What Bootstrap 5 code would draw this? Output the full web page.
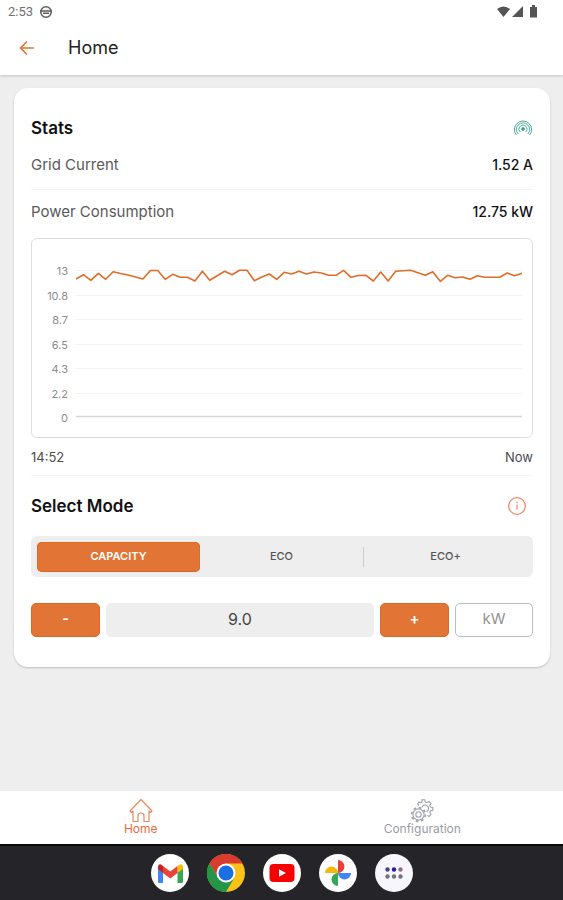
<!DOCTYPE html>
<html lang="en">
<head>
<meta charset="utf-8">
<meta name="viewport" content="width=device-width, initial-scale=1">
<title>Home</title>
<link href="https://cdn.jsdelivr.net/npm/bootstrap@5.3.0/dist/css/bootstrap.min.css" rel="stylesheet">
<style>
:root { --accent: #e27535; --soft: #eeeeee; }
body { font-family: Inter, "Noto Sans", sans-serif; font-size: 14px; line-height: 20px; color: #222; background: var(--soft); }
svg { display: block; flex: none; }
.status { height: 24px; font-family: Roboto, sans-serif; font-size: 13px; color: #707070; padding: 0 24px 0 8px; }
.appbar { height: 51px; padding: 0 19px 3px; }
.top-area { background: #fff; box-shadow: 0 1px 3px rgba(0,0,0,.18); }
.appbar h1 { font-size: 18px; line-height: 24px; font-weight: 400; margin-left: 33px; }
.panel { border-radius: 14px; margin: 13px 13px 0 14px; padding: 28px 17px 30px; box-shadow: 0 1px 2px rgba(0,0,0,.2); }
.panel h2 { font-size: 17px; line-height: 24px; font-weight: 600; color: #111; }
.stat-row { height: 50px; border-bottom: 1px solid #f3f3f3; }
.stat-row.power { height: 48px; border: 0; padding-bottom: 5px; }
.stat-row dt { font-size: 15px; font-weight: 400; color: #5a5a5a; }
.stat-row dd { font-weight: 500; color: #111; }
.chart { border: 1px solid #dedede; border-radius: 6px; height: 200px; padding: 25px 10px 12px; }
.scale { width: 26px; height: 161px; font-size: 11px; line-height: 14px; color: #8c8c8c; }
.plot { height: 147px; min-width: 0; overflow: visible; margin: 6px 0 0 8px; flex: 1 1 0; }
.plot path { fill: none; vector-effect: non-scaling-stroke; }
.times { height: 38px; font-size: 13px; color: #4c4c4c; border-bottom: 1px solid #f3f3f3; }
.mode-head { height: 60px; }
.info { margin-right: 6px; }
.modes { background: var(--soft); border-radius: 6px; padding: 5px 6px; height: 41px; }
.modes .btn { flex: 1 1 0; font-size: 11px; line-height: 16px; font-weight: 500; color: #555; border: 0; border-radius: 5px; padding: 6px 0 8px; }
.modes .btn.active { background: var(--accent); color: #fff; font-weight: 600; box-shadow: inset 0 0 0 1px #dc6924; }
.modes .vr { height: 20px; color: #666; }
.amount { margin-top: 26px; gap: 6px; }
.amount .btn, .amount input { height: 34px; border-radius: 5px; padding: 0 0 3px; line-height: 20px; }
.amount .step { background: var(--accent); border-color: #dc6924; color: #fff; width: 69px; font-size: 15px; font-weight: 600; }
.amount input { background: var(--soft); border: 0; font-size: 16px; color: #444; min-width: 0; }
.amount .unit { width: 78px; border-color: #b9bfbd; color: #929292; font-size: 15px; }
.tabs { background: #fff; height: 53px; }
.tabs a { flex: 1 1 0; font-size: 12px; line-height: 12px; color: #9a9ca4; padding-top: 7px; }
.tabs a.active { color: #e36d3c; }
.dock { background: #252529; border-top: 2px solid #0b0b0c; height: 56px; gap: 18px; }
.dock button { width: 38px; height: 38px; }
</style>
<script src="https://cdn.jsdelivr.net/npm/bootstrap@5.3.0/dist/js/bootstrap.bundle.min.js"></script>
</head>
<body class="d-flex flex-column min-vh-100">
<header class="top-area">
  <div class="status d-flex align-items-center">
    <span>2:53</span>
    <svg class="ms-1" width="16" height="14" viewBox="-1 0 16 14" fill="none" stroke="#5c5c5c" stroke-width="1.500"><circle cx="8" cy="7" r="5.200"/><path d="M2 6h12M5 8.200h6"/></svg>
    <svg class="ms-auto" width="42" height="14" viewBox="0 0 42 14" fill="#555"><path d="M0 4Q6.500-1 13 4L6.500 12zM26 1v11H15zM33 2h2V0h3v2h2v10.500h-7z"/></svg>
  </div>
  <div class="appbar d-flex align-items-center">
    <button class="btn p-0 border-0" type="button" aria-label="Back">
      <svg width="16" height="16" viewBox="0 0 16 16" fill="none" stroke="#e27535" stroke-width="1.600"><path d="M15 8H1.500M8 1.500L1.500 8L8 14.500"/></svg>
    </button>
    <h1 class="mb-0">Home</h1>
  </div>
</header>

<main class="flex-grow-1">
  <section class="panel bg-white">
    <div class="d-flex justify-content-between align-items-center">
      <h2 class="mb-0">Stats</h2>
      <svg width="20" height="20" viewBox="0 0 20 20" fill="none" stroke="#4fae9b" stroke-width="1"><circle cx="10" cy="11" r="1.400" fill="#25957e"/><path d="M7.200 14a4 4 0 1 1 5.600 0M5.200 16a6.600 6.600 0 1 1 9.600 0M3.300 17a8.600 8.600 0 1 1 13.400 0"/></svg>
    </div>
    <dl class="mb-0">
      <div class="stat-row d-flex justify-content-between align-items-center"><dt>Grid Current</dt><dd class="mb-0">1.52 A</dd></div>
      <div class="stat-row power d-flex justify-content-between align-items-center"><dt>Power Consumption</dt><dd class="mb-0">12.75 kW</dd></div>
    </dl>
    <div class="chart d-flex align-items-start">
      <div class="scale d-flex flex-column justify-content-between text-end">
        <span>13</span><span>10.8</span><span>8.7</span><span>6.5</span><span>4.3</span><span>2.2</span><span>0</span>
      </div>
      <svg class="plot" viewBox="0 0 60 147" preserveAspectRatio="none" role="img" aria-label="Power consumption">
        <path stroke="#f2f2f2" d="M0 .5H60M0 25.500H60M0 49.500H60M0 74.500H60M0 98.500H60M0 123.500H60"/>
        <path stroke="#d6d6d6" stroke-width="1.500" d="M0 146.500H60"/>
        <path stroke="#df6d2a" stroke-width="1.600" stroke-linejoin="round" d="M0 9L1 4.700L2 10.300L3 3.300L4 9.300L5 1.700L6 3.500L7 5L8 7L9 9L10 .5L11 .5L12 9.300L13 4.300L14 7.300L15 7.300L16 11L17 1.300L18 10.300L19 5.700L20 1.300L21 4.700L22 .3L23 .3L24 10.700L25 7L26 4L27 9.300L28 2.300L29 4L30 1.300L31 4L32 2L33 3L34 5.300L35 5.300L36 .3L37 7.300L38 5.500L39 5.300L40 11L41 2L42 11L43 1.300L44 .7L45 .3L46 2.700L47 5.300L48 1.700L49 11.300L50 5.300L51 7.700L52 7L53 9.300L54 5.700L55 7.300L57 7.300L58 3L59 5.700L60 3.300"/>
      </svg>
    </div>
    <div class="times d-flex justify-content-between align-items-center"><span>14:52</span><span>Now</span></div>
    <div class="mode-head d-flex justify-content-between align-items-center">
      <h2 class="mb-0">Select Mode</h2>
      <button class="info btn p-0 border-0" type="button" aria-label="About modes">
        <svg width="20" height="20" viewBox="0 0 20 20" fill="none" stroke="#ed8868" stroke-width="1.300"><circle cx="10" cy="10" r="8.300"/><path stroke="#f0a590" stroke-width="1.600" d="M10 8.500v5M10 5.700v1.500"/></svg>
      </button>
    </div>
    <div class="modes d-flex align-items-center" role="group" aria-label="Mode">
      <button class="btn active" type="button" aria-pressed="true">CAPACITY</button>
      <button class="btn" type="button">ECO</button>
      <div class="vr align-self-center"></div>
      <button class="btn" type="button">ECO+</button>
    </div>
    <div class="amount d-flex">
      <button class="btn step" type="button" aria-label="Decrease">-</button>
      <input class="flex-grow-1 text-center" type="text" value="9.0" aria-label="Capacity">
      <button class="btn step" type="button" aria-label="Increase">+</button>
      <button class="btn unit" type="button">kW</button>
    </div>
  </section>
</main>

<nav class="tabs d-flex text-center" aria-label="Main">
  <a class="active text-decoration-none d-flex flex-column align-items-center" href="#" aria-current="page">
    <svg width="24" height="25" viewBox="0 0 24 25" fill="none" stroke="#e58a66" stroke-width="1.200" stroke-linejoin="round"><path d="M1 13L12 1.500L23 13L21.500 14.500L20 13V23.500H15V18a3 3 0 0 0-6 0V23.500H4V13L2.500 14.500z"/></svg>
    <span>Home</span>
  </a>
  <a class="text-decoration-none d-flex flex-column align-items-center" href="#">
    <svg width="24" height="25" viewBox="0 0 24 25" fill="none" stroke="#a0a2aa" stroke-width="1.100">
      <circle cx="8.500" cy="16.500" r="5.600"/><circle cx="8.500" cy="16.500" r="2.700"/><circle cx="8.500" cy="16.500" r="6.900" stroke-width="1.700" stroke-dasharray="2.700 2.720"/>
      <path d="M9 7.500L7.500 6L9 4L11 4.800L12 4V1.800H14.800L15.300 4L17 4.700L19 3.500L21 5.600L19.800 7.500L20.500 9L22.800 9.500V12.300L20.500 13L19.800 14.700L21 16.500L19 18.500L17.300 17.400"/><path d="M12 9.200A3.400 3.400 0 1 1 16.500 13.600"/>
    </svg>
    <span>Configuration</span>
  </a>
</nav>
<footer class="dock d-flex justify-content-center align-items-center">
  <button class="btn p-0 border-0" type="button" aria-label="Gmail"><svg width="38" height="38" viewBox="0 0 38 38"><circle cx="19" cy="19" r="19" fill="#fff"/><path fill="#4285f4" d="M7 14L12 17.500V29H8.500Q7 29 7 27.500z"/><path fill="#34a853" d="M26.500 17.500L32 13.500V27.500Q32 29 30.500 29H26.500z"/><path fill="#fbbc04" d="M26.500 12L29 10.500Q32 9.500 32 13V15L26.500 19z"/><path fill="#c5221f" d="M7 13Q7 9.500 10 10.500L12 12V19L7 15z"/><path fill="#ea4335" d="M12 12L19.300 17.500L26.500 12V19L19.300 24.500L12 19z"/></svg></button>
  <button class="btn p-0 border-0" type="button" aria-label="Chrome"><svg width="38" height="38" viewBox="0 0 38 38"><circle cx="19" cy="19" r="19" fill="#fbc116"/><path fill="#d93c2e" d="M2.500 9.500A19 19 0 0 1 35.500 9.500H19L11 23.500z"/><path fill="#249447" d="M2.500 9.500A19 19 0 0 0 19 38L27.500 23.500L19 28L11 23.500z"/><circle cx="19" cy="19" r="9.500" fill="#fff"/><circle cx="19" cy="19" r="7.500" fill="#1b6fe4"/></svg></button>
  <button class="btn p-0 border-0" type="button" aria-label="YouTube"><svg width="38" height="38" viewBox="0 0 38 38"><circle cx="19" cy="19" r="19" fill="#fff"/><rect x="6.500" y="10" width="25" height="18" rx="4" fill="#f60000"/><path fill="#fff" d="M16 15.300L23 19L16 22.700z"/></svg></button>
  <button class="btn p-0 border-0" type="button" aria-label="Photos"><svg width="38" height="38" viewBox="0 0 38 38"><circle cx="19" cy="19" r="19" fill="#fff"/><path fill="#ea4335" d="M19 6A6.500 6.500 0 0 1 19 19z"/><path fill="#4285f4" d="M19 19H32A6.500 6.500 0 0 1 19 19z"/><path fill="#34a853" d="M19 19V32A6.500 6.500 0 0 1 19 19z"/><path fill="#f6b90b" d="M19 19H6A6.500 6.500 0 0 1 19 19z"/></svg></button>
  <button class="btn p-0 border-0" type="button" aria-label="All apps"><svg width="38" height="38" viewBox="0 0 38 38"><circle cx="19" cy="19" r="19" fill="#f8f6fd"/><g fill="#73717e"><circle cx="12.500" cy="22.500" r="2.200"/><circle cx="19" cy="22.500" r="2.200"/><circle cx="25.500" cy="22.500" r="2.200"/></g><circle cx="12.500" cy="15.500" r="2.200" fill="#46458b"/><circle cx="19" cy="15.500" r="2.200" fill="#28208d"/><circle cx="25.500" cy="15.500" r="2.200" fill="#946b80"/></svg></button>
</footer>
</body>
</html>
